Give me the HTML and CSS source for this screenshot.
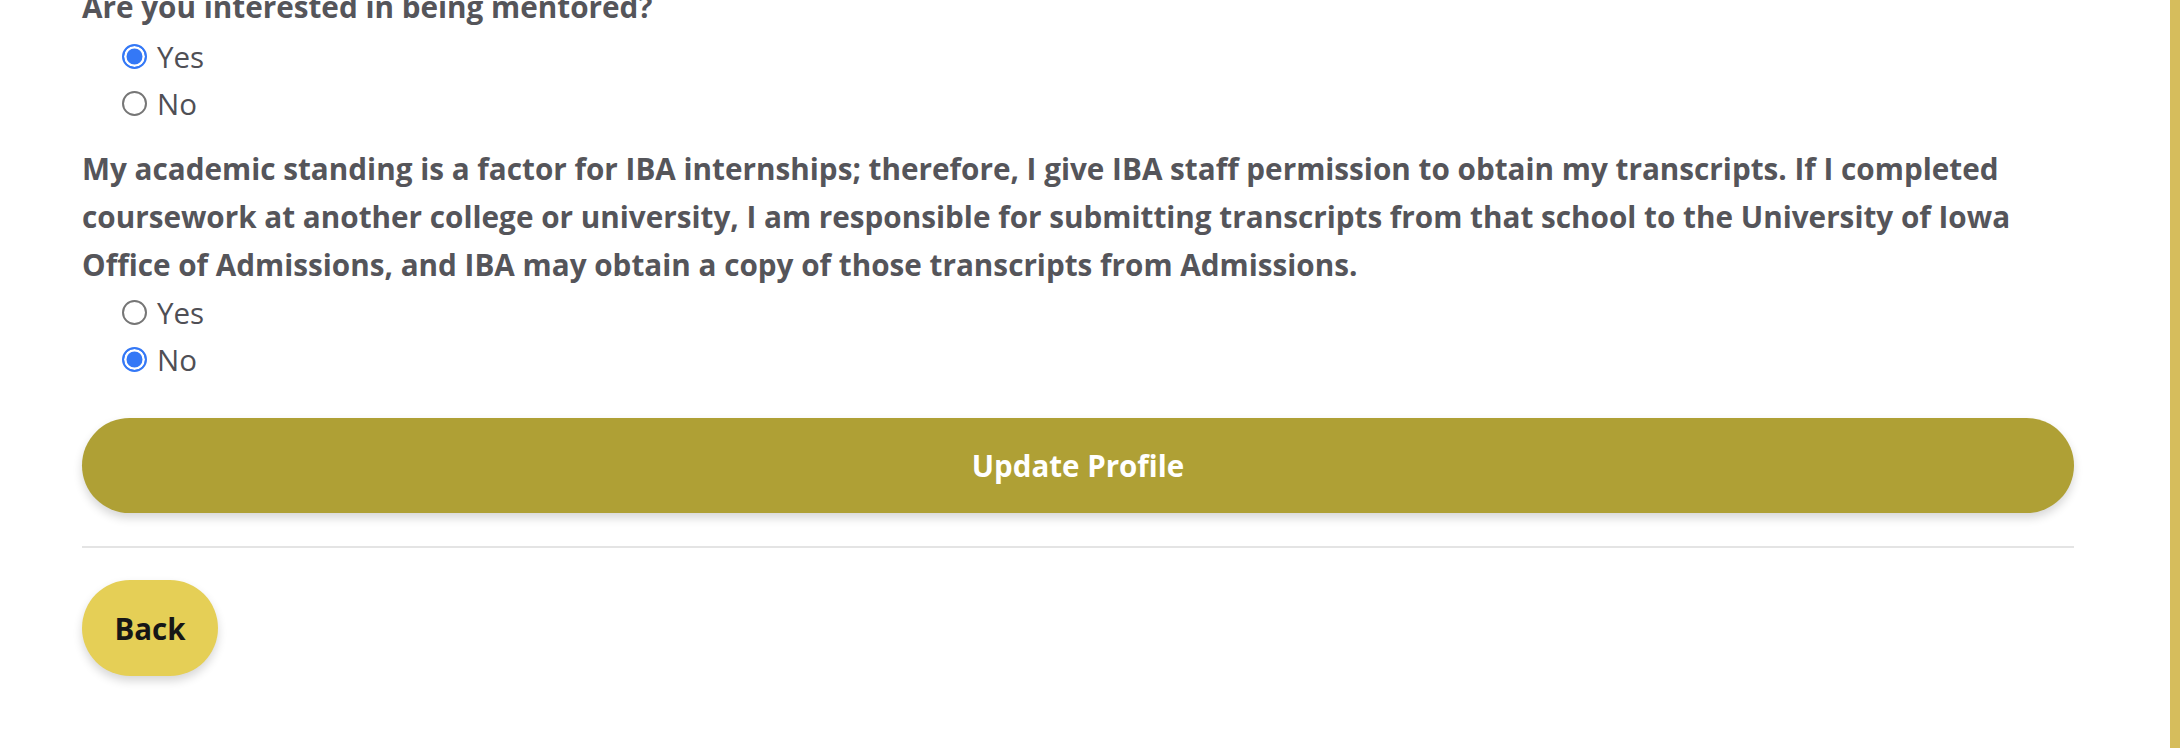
FILE: index.html
```html
<!DOCTYPE html>
<html lang="en">
<head>
<meta charset="utf-8">
<title>Profile</title>
<link rel="stylesheet" href="styles.css">
</head>
<body>
<div class="page">
  <main class="content">
    <form class="form">
      <fieldset class="question question-first">
        <p class="question-text">Are you interested in being mentored?</p>
        <label class="option"><input type="radio" name="mentor" checked><span>Yes</span></label>
        <label class="option"><input type="radio" name="mentor"><span>No</span></label>
      </fieldset>
      <fieldset class="question question-spaced">
        <p class="question-text">My academic standing is a factor for IBA internships; therefore, I give IBA staff permission to obtain my transcripts. If I completed coursework at another college or university, I am responsible for submitting transcripts from that school to the University of Iowa Office of Admissions, and IBA may obtain a copy of those transcripts from Admissions.</p>
        <label class="option"><input type="radio" name="transcripts"><span>Yes</span></label>
        <label class="option"><input type="radio" name="transcripts" checked><span>No</span></label>
      </fieldset>
      <button type="button" class="btn btn-primary">Update Profile</button>
    </form>
    <hr class="divider">
    <button type="button" class="btn btn-back">Back</button>
  </main>
  <div class="side-stripe"></div>
</div>
</body>
</html>
```

FILE: styles.css
```css
html, body {
  margin: 0;
  padding: 0;
  background: #ffffff;
  height: 100%;
  overflow: hidden;
}

body {
  font-family: "Open Sans", "Noto Sans", "Liberation Sans", sans-serif;
  color: #55555a;
}

.page {
  display: flex;
  height: 748px;
}

.content {
  flex: 1;
  padding: 0 96px 0 82px;
  margin-top: -17px;
  display: flex;
  flex-direction: column;
  align-items: flex-start;
}

.form {
  display: flex;
  flex-direction: column;
  width: 100%;
}

.question {
  border: 0;
  margin: 0;
  padding: 0;
  display: flex;
  flex-direction: column;
}

.question-first .question-text {
  margin-bottom: 2px;
}

.question-spaced {
  margin-top: 18px;
}

.question-text {
  margin: 0;
  font-size: 29.7px;
  font-weight: 700;
  line-height: 48px;
  color: #55555a;
}

.option {
  display: flex;
  align-items: center;
  gap: 10px;
  padding-left: 40px;
  height: 47px;
  font-size: 29.5px;
  font-weight: 400;
  color: #4f4f55;
}

.option input {
  appearance: none;
  -webkit-appearance: none;
  margin: 0;
  width: 25px;
  height: 25px;
  border-radius: 50%;
  border: 2px solid #767676;
  background: #ffffff;
  box-sizing: border-box;
  flex: none;
}

.option input:checked {
  border: 2.5px solid #3478f6;
  background: #3478f6;
  box-shadow: inset 0 0 0 2.5px #ffffff;
}

.btn {
  border: 0;
  font-family: inherit;
  font-weight: 700;
  font-size: 29.5px;
  border-radius: 48px;
  cursor: pointer;
  box-shadow: 0 5px 10px rgba(0, 0, 0, 0.16);
}

.btn-primary {
  margin-top: 35px;
  width: 100%;
  height: 95px;
  background: #afa035;
  color: #ffffff;
}

.divider {
  width: 100%;
  margin: 33px 0 0 0;
  border: 0;
  border-top: 2px solid #e4e4e4;
  height: 0;
}

.btn-back {
  margin-top: 32px;
  width: 136px;
  height: 96px;
  padding: 0;
  background: #e5cf56;
  color: #161616;
}

.side-stripe {
  width: 10px;
  flex: none;
  background: #d6bd5c;
}
```
